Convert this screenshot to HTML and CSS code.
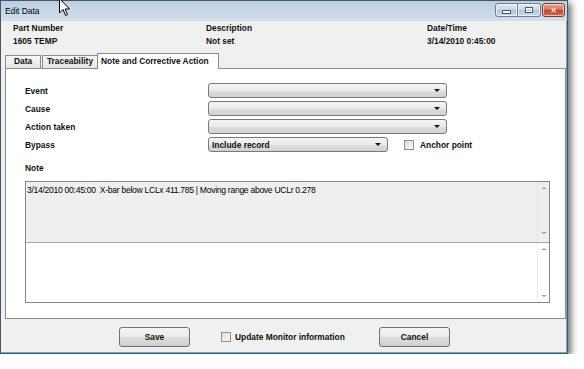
FILE: index.html
```html
<!doctype html>
<html lang="en">
<head>
    <meta charset="UTF-8">
    <title>Edit Data</title>
    <link rel="stylesheet" href="styles.css">
</head>
<body>
<div class="window">
    <div class="titlebar">
        <span class="titlebar__title">Edit Data</span>
        <div class="titlebar__buttons">
            <span class="tb-btn tb-btn--min"><i></i></span>
            <span class="tb-btn tb-btn--max"><i></i></span>
            <span class="tb-btn tb-btn--close">&#x2715;</span>
        </div>
    </div>
    <div class="client">
        <div class="summary">
            <div class="summary__col">
                <div class="summary__line">Part Number</div>
                <div class="summary__line">1605 TEMP</div>
            </div>
            <div class="summary__col">
                <div class="summary__line">Description</div>
                <div class="summary__line">Not set</div>
            </div>
            <div class="summary__col">
                <div class="summary__line">Date/Time</div>
                <div class="summary__line">3/14/2010 0:45:00</div>
            </div>
        </div>
        <div class="tabs">
            <span class="tabs__item tabs__item--data">Data</span>
            <span class="tabs__item tabs__item--trace">Traceability</span>
            <span class="tabs__item tabs__item--active">Note and Corrective Action</span>
        </div>
        <div class="panel">
            <div class="fields">
                <span class="fields__label">Event</span>
                <span class="combo"><span class="combo__arrow"></span></span>
                <span class="fields__label">Cause</span>
                <span class="combo"><span class="combo__arrow"></span></span>
                <span class="fields__label">Action taken</span>
                <span class="combo"><span class="combo__arrow"></span></span>
                <span class="fields__label">Bypass</span>
                <div class="fields__row">
                    <span class="combo combo--short"><span class="combo__value">Include record</span><span class="combo__arrow"></span></span>
                    <span class="check"></span>
                    <span class="check-label">Anchor point</span>
                </div>
            </div>
            <div class="note-label">Note</div>
            <div class="note">
                <div class="note__box note__box--readonly">
                    <div class="note__text">3/14/2010 00:45:00&nbsp; X-bar below LCLx 411.785 | Moving range above UCLr 0.278</div>
                    <div class="scroll scroll--top"><span class="scroll__up"></span><span class="scroll__down"></span></div>
                </div>
                <div class="note__box">
                    <div class="note__text"></div>
                    <div class="scroll"><span class="scroll__up"></span><span class="scroll__down"></span></div>
                </div>
            </div>
        </div>
        <div class="footer">
            <span class="btn">Save</span>
            <div class="footer__check">
                <span class="check"></span>
                <span class="check-label">Update Monitor information</span>
            </div>
            <span class="btn">Cancel</span>
        </div>
    </div>
    <svg class="cursor" width="12" height="19" viewBox="0 0 12 19">
        <path d="M0.5 0.5 L0.5 15 L4 11.5 L6.5 17.5 L8.5 16.7 L6 11 L10.5 11 Z" fill="#fff" stroke="#000" stroke-width="1"/>
    </svg>
</div>
</body>
</html>
```

FILE: styles.css
```css
body {
    margin: 0;
    background: #ffffff;
    font-family: "Liberation Sans", Arial, sans-serif;
    font-size: 8.4px;
    font-weight: bold;
    color: #111111;
}

.window {
    position: relative;
    width: 566px;
    height: 352px;
    border: 1px solid #4a555f;
    display: flex;
    flex-direction: column;
    box-shadow: 3px 3px 7px rgba(0, 0, 0, 0.6);
}

/* title bar */

.titlebar {
    height: 20px;
    flex-shrink: 0;
    display: flex;
    align-items: center;
    padding-left: 4px;
    background: linear-gradient(#bccee4, #d2dfee);
}

.titlebar__title {
    font-size: 8.4px;
    font-weight: normal;
    color: #000000;
}

.titlebar__buttons {
    margin-left: auto;
    margin-right: 2px;
    align-self: flex-start;
    margin-top: 2px;
    display: flex;
}

.tb-btn {
    height: 12px;
    display: flex;
    align-items: center;
    justify-content: center;
    border: 1px solid #6e7f94;
    background: linear-gradient(#e4ecf5, #c4d3e4 50%, #b2c5db 51%, #c9d8e9);
    box-shadow: inset 0 0 0 1px rgba(255, 255, 255, 0.6);
}

.tb-btn--min {
    width: 21px;
    border-radius: 3px 0 0 3px;
}

.tb-btn--min i {
    width: 7px;
    height: 2px;
    margin-top: 4px;
    background: #ffffff;
    border: 1px solid #4a5868;
}

.tb-btn--max {
    width: 22px;
    border-left: none;
    border-radius: 0 3px 3px 0;
}

.tb-btn--max i {
    width: 6px;
    height: 4px;
    border: 1px solid #4a5868;
    box-shadow: inset 0 0 0 1px #ffffff;
}

.tb-btn--close {
    width: 21px;
    margin-left: 1px;
    border-color: #7a3a30;
    border-radius: 3px;
    color: #ffffff;
    font-family: "DejaVu Sans", sans-serif;
    font-size: 8px;
    background: linear-gradient(#e8a799, #d4705e 50%, #c4432f 51%, #d66a4f);
}

/* client area */

.client {
    flex: 1;
    display: flex;
    flex-direction: column;
    background: #f0f0f0;
    padding-left: 4px;
    border-right: 1px solid #5eaed6;
    border-bottom: 1px solid #5eaed6;
}

.summary {
    display: grid;
    grid-template-columns: 193px 221px auto;
    padding: 1px 0 0 8px;
    margin-bottom: 5px;
}

.summary__line {
    line-height: 13px;
}

.tabs {
    height: 16px;
    display: flex;
    align-items: flex-end;
    margin-bottom: -1px;
    position: relative;
    z-index: 1;
}

.tabs__item {
    line-height: 11px;
    text-align: center;
    border: 1px solid #898c95;
    border-bottom: none;
    padding-bottom: 1px;
    margin-bottom: 1px;
    background: linear-gradient(#f6f6f6, #e6e6e6);
}

.tabs__item--data {
    width: 34px;
}

.tabs__item--trace {
    width: 54px;
    margin-left: 1px;
}

.tabs__item--active {
    width: 115px;
    padding: 2px 2px 2px 3px;
    margin-bottom: 0;
    text-align: left;
    background: #ffffff;
    margin-left: -1px;
}

.panel {
    flex: 1;
    background: #ffffff;
    border: 1px solid #898c95;
    padding: 14px 15px 0 19px;
}

.fields {
    display: grid;
    grid-template-columns: 183px auto;
    grid-auto-rows: 15px;
    row-gap: 3px;
    align-items: center;
}

.fields__row {
    display: flex;
    align-items: center;
}

.combo {
    position: relative;
    width: 237px;
    height: 13px;
    border: 1px solid #7a7a7a;
    border-radius: 3px;
    background: linear-gradient(#f4f4f4, #ebebeb 50%, #dddddd 51%, #d2d2d2);
    display: flex;
    align-items: center;
}

.combo--short {
    width: 178px;
}

.combo__value {
    padding-left: 3px;
}

.combo__arrow {
    position: absolute;
    right: 6px;
    top: 5px;
    border-left: 3px solid transparent;
    border-right: 3px solid transparent;
    border-top: 3px solid #111111;
}

.check {
    width: 8px;
    height: 8px;
    border: 1px solid #8e8f8f;
    background: linear-gradient(135deg, #dcdcdc, #fbfbfb);
    flex-shrink: 0;
}

.fields__row .check {
    margin-left: 16px;
}

.check-label {
    margin-left: 6px;
}

.note-label {
    margin-top: 11px;
    line-height: 11px;
}

.note {
    margin-top: 7px;
    width: 523px;
    border: 1px solid #828790;
}

.note__box {
    display: flex;
    height: 59px;
    background: #ffffff;
}

.note__box--readonly {
    height: 60px;
    background: #efefef;
    border-bottom: 1px solid #a6a8ad;
}

.note__text {
    flex: 1;
    padding: 3px 1px;
    line-height: 11px;
    font-weight: normal;
    font-size: 8.6px;
    letter-spacing: -0.3px;
    color: #000000;
    white-space: nowrap;
}

.scroll {
    width: 12px;
    display: flex;
    flex-direction: column;
    justify-content: space-between;
    align-items: center;
    padding: 5px 0 5px;
    box-sizing: border-box;
    border-left: 1px solid #ececec;
}

.scroll--top {
    padding-bottom: 8px;
    border-left-color: #e4e4e4;
}

.scroll__up {
    border-left: 3px solid transparent;
    border-right: 3px solid transparent;
    border-bottom: 2px solid #a4a4a4;
}

.scroll__down {
    border-left: 3px solid transparent;
    border-right: 3px solid transparent;
    border-top: 2px solid #a4a4a4;
}

/* footer */

.footer {
    height: 33px;
    flex-shrink: 0;
    display: flex;
    align-items: flex-start;
    padding: 8px 0 0 114px;
    box-sizing: border-box;
}

.btn {
    width: 69px;
    height: 18px;
    border: 1px solid #707070;
    border-radius: 3px;
    background: linear-gradient(#f4f4f4, #ebebeb 50%, #dddddd 51%, #d0d0d0);
    display: flex;
    align-items: center;
    justify-content: center;
}

.footer__check {
    width: 158px;
    margin-left: 31px;
    height: 20px;
    display: flex;
    align-items: center;
}

.footer__check .check-label {
    margin-left: 4px;
}

.cursor {
    position: absolute;
    left: 58px;
    top: -3px;
}
```
